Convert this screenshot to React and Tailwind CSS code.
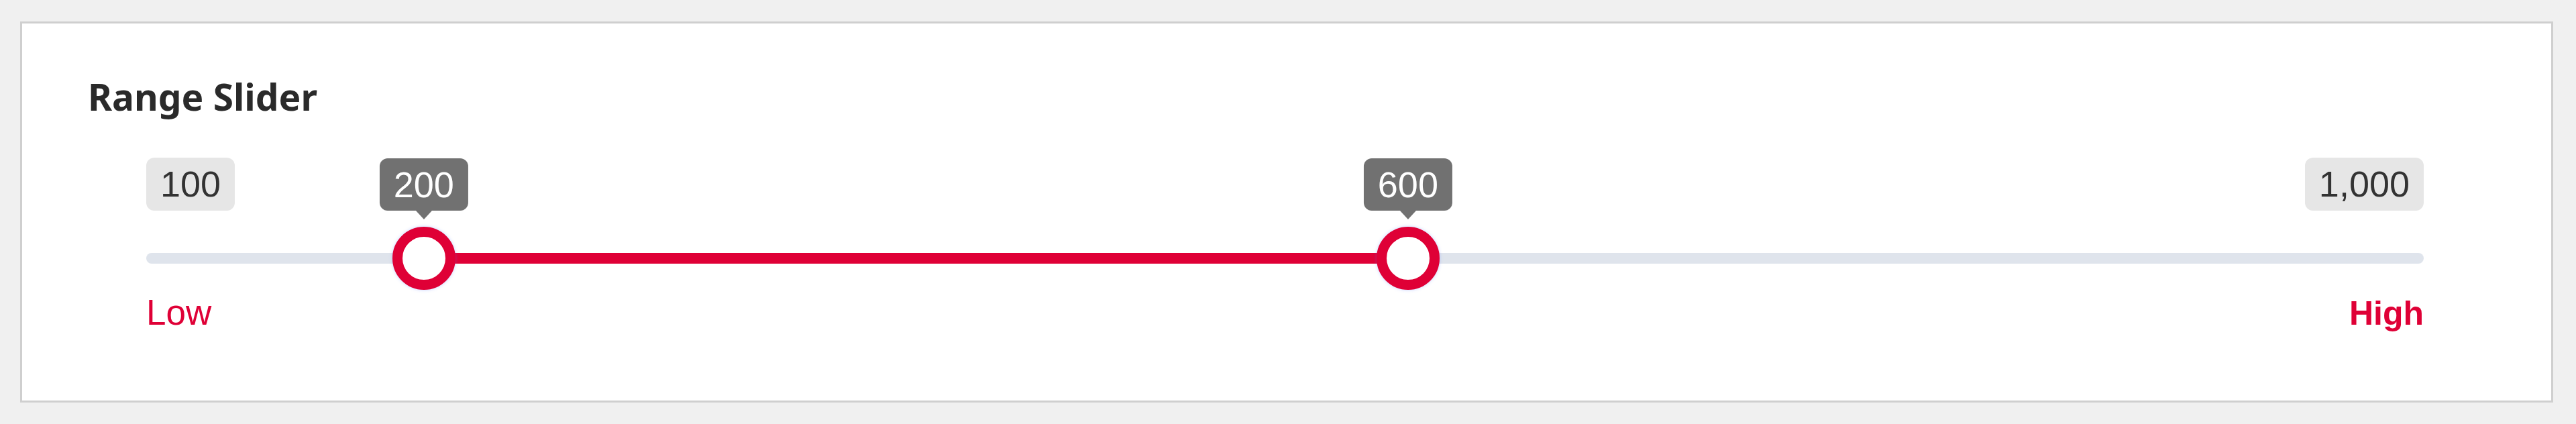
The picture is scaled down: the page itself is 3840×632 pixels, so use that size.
import React from "react";

const MIN = 100;
const MAX = 1000;
const TRACK_W = 3395;
const THUMB = 94;

const values = [200, 600];

function centerOf(v) {
  return THUMB / 2 + ((v - MIN) / (MAX - MIN)) * (TRACK_W - THUMB);
}

function Badge({ children }) {
  return (
    <div className="h-[79px] px-[21px] rounded-[12px] bg-[#e6e6e6] text-[#333333] text-[54px] leading-[79px] font-['Liberation_Sans',Arial,sans-serif]">
      {children}
    </div>
  );
}

function Thumb({ value }) {
  const left = centerOf(value);
  return (
    <div
      className="absolute top-1/2 -translate-x-1/2 -translate-y-1/2"
      style={{ left: `${left}px` }}
    >
      <div className="absolute bottom-full left-1/2 -translate-x-1/2 mb-[24px]">
        <div className="relative h-[78px] px-[21px] rounded-[12px] bg-[#717171] text-white text-[54px] leading-[78px] font-['Liberation_Sans',Arial,sans-serif]">
          {value.toLocaleString("en-US")}
          <div className="absolute top-full left-1/2 -translate-x-1/2 w-0 h-0 border-x-[12px] border-x-transparent border-t-[13px] border-t-[#717171]" />
        </div>
      </div>
      <div className="w-[94px] h-[94px] rounded-full border-[15px] border-[#df0036] bg-white shadow-[0_0_5px_rgba(90,120,255,0.35)]" />
    </div>
  );
}

export default function App() {
  const [lo, hi] = values;
  const fillLeft = centerOf(lo);
  const fillWidth = centerOf(hi) - centerOf(lo);

  return (
    <div className="w-full h-[632px] bg-[#f0f0f0] pt-[32px] pl-[30px]">
      <div className="w-[3776px] h-[568px] border-[3px] border-[#cfcfcf] bg-white pt-[77px]">
        <h2 className="pl-[98px] text-[55px] leading-[64px] font-bold text-[#2a2a2a] font-['Noto_Sans',sans-serif]">
          Range Slider
        </h2>

        <div className="mt-[59px] pl-[185px] w-[3580px]">
          <div className="flex justify-between">
            <Badge>100</Badge>
            <Badge>1,000</Badge>
          </div>

          <div className="relative mt-[24px] h-[94px] flex items-center">
            <div className="w-full h-[16px] rounded-full bg-[#dfe4ec]" />
            <div
              className="absolute top-1/2 -translate-y-1/2 h-[16px] bg-[#df0036]"
              style={{ left: `${fillLeft}px`, width: `${fillWidth}px` }}
            />
            {values.map((v) => (
              <Thumb key={v} value={v} />
            ))}
          </div>

          <div className="mt-[7px] flex items-baseline justify-between text-[#df0036] font-['Liberation_Sans',Arial,sans-serif]">
            <span className="text-[53px] leading-[53px]">Low</span>
            <span className="text-[50px] leading-[53px] font-bold">High</span>
          </div>
        </div>
      </div>
    </div>
  );
}
